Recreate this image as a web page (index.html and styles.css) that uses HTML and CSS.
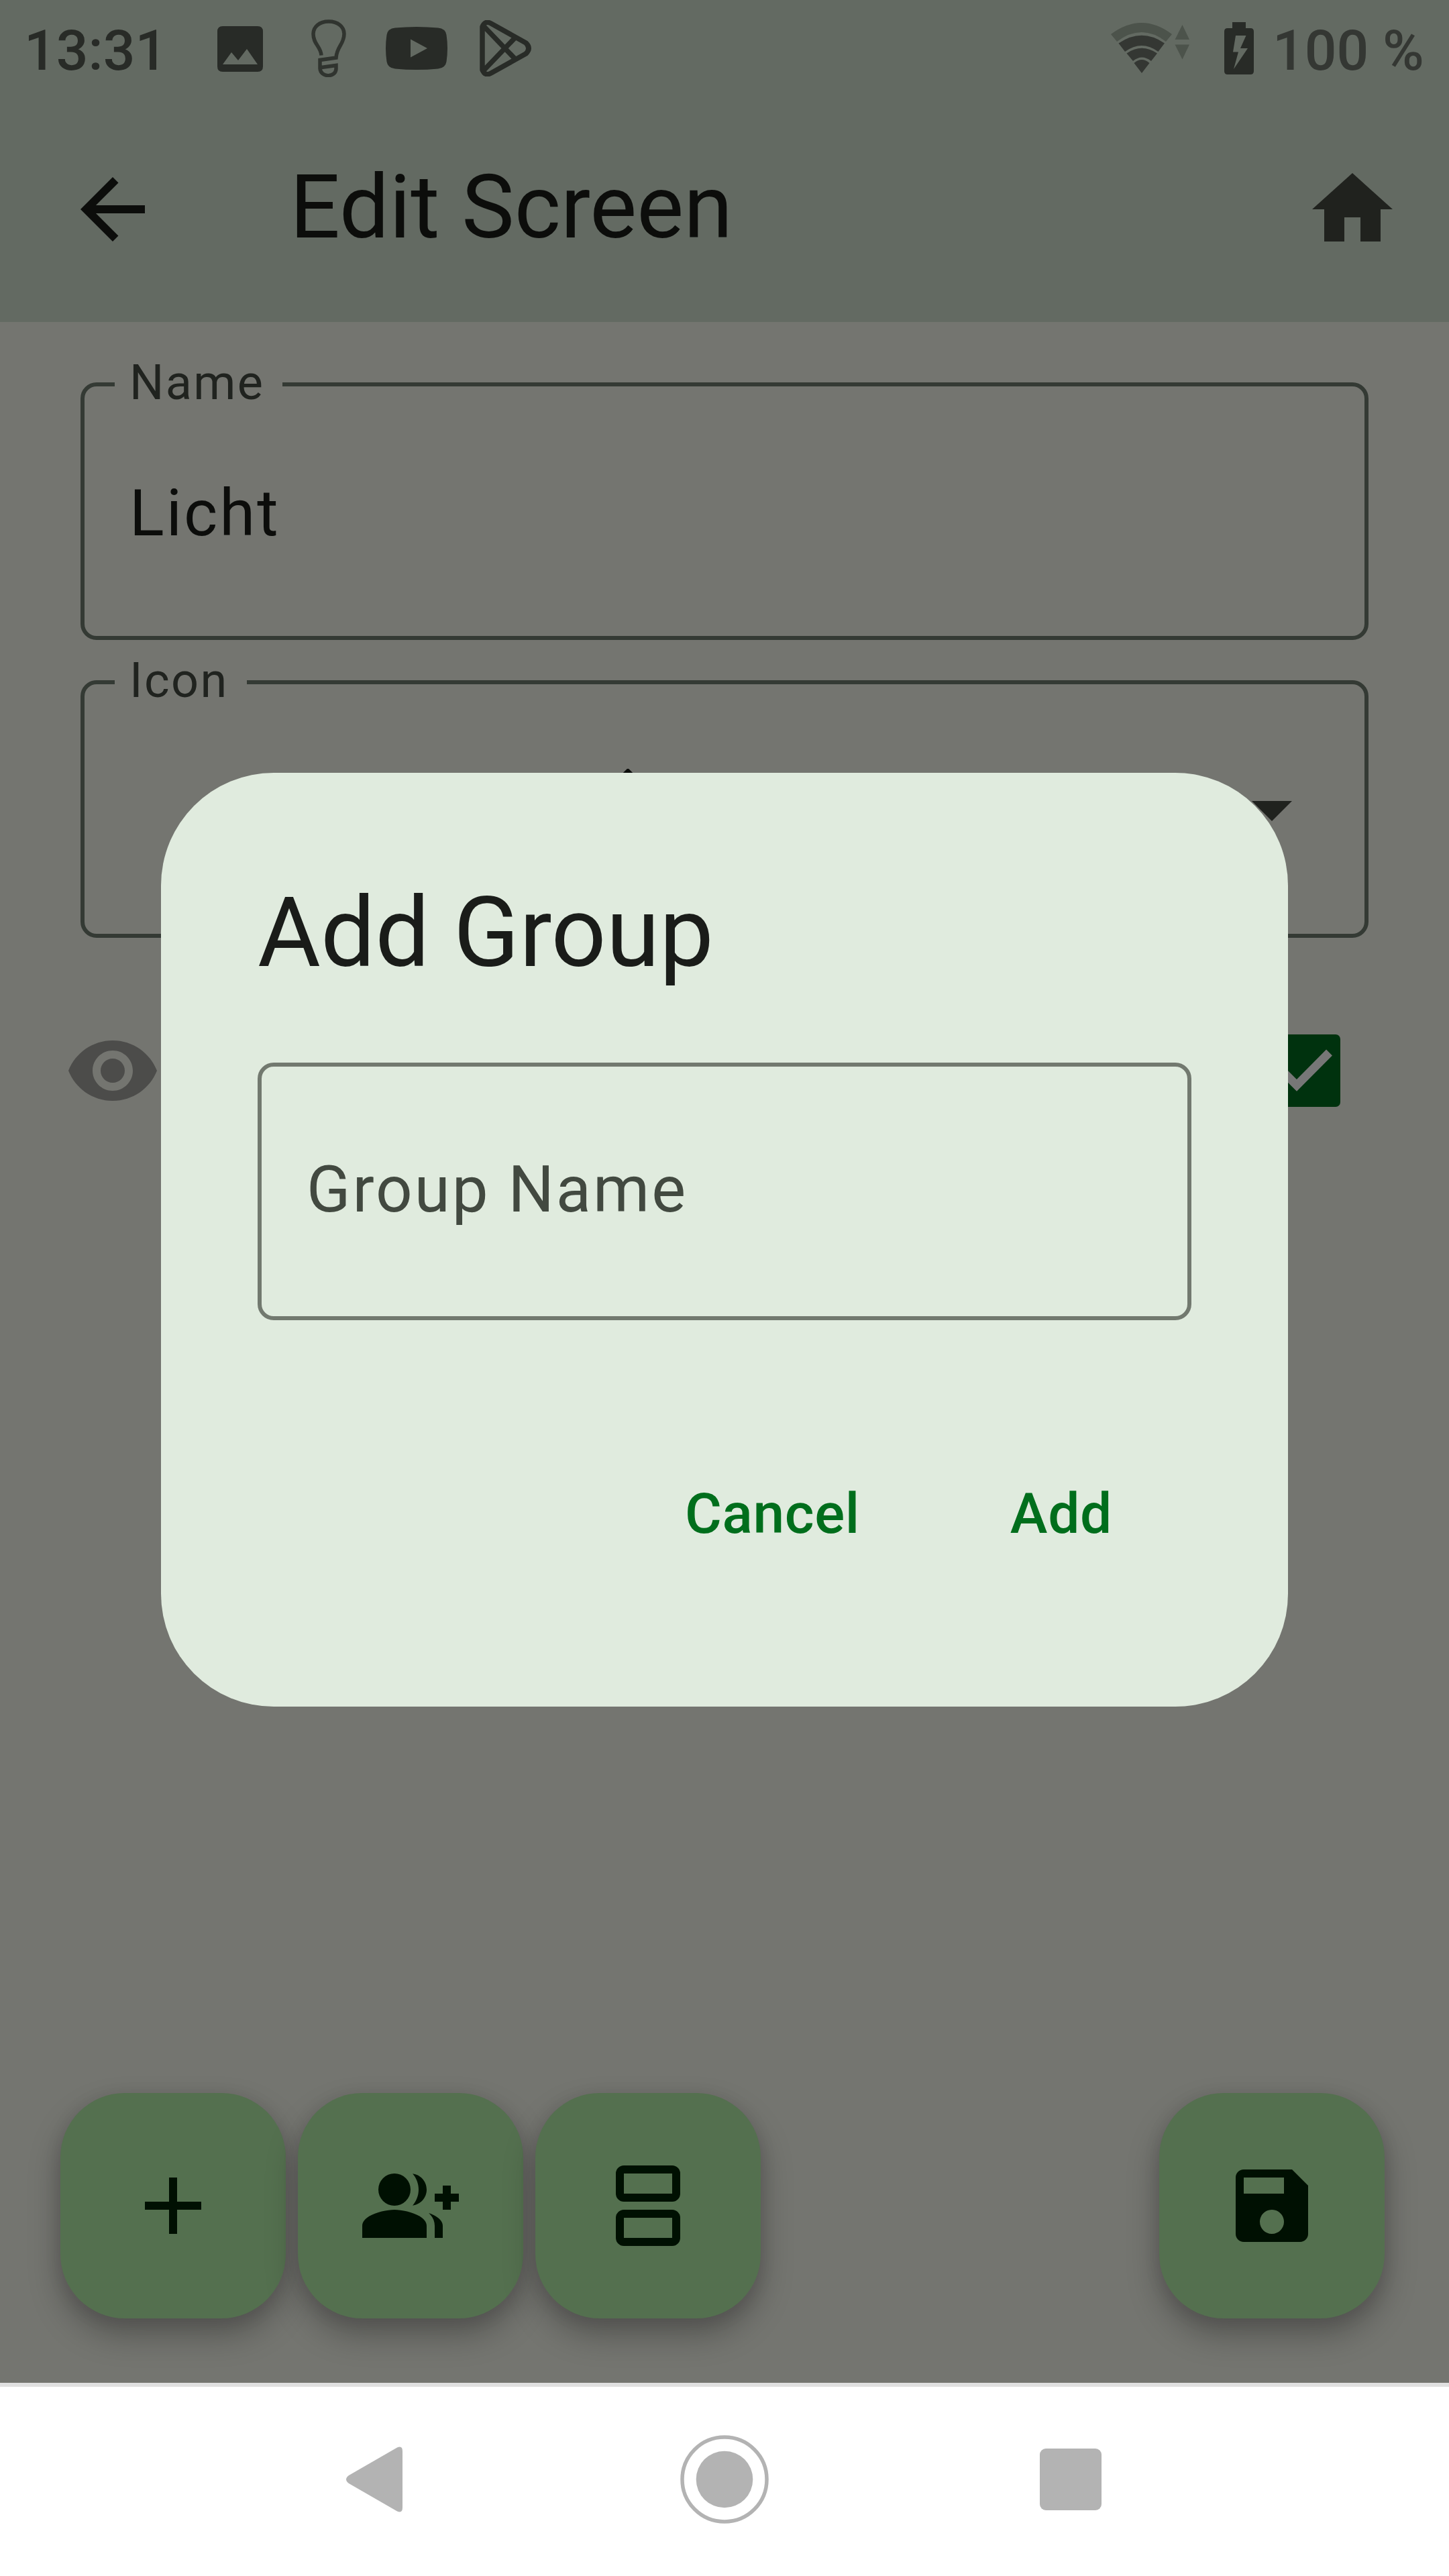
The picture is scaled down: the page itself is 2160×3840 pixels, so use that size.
FILE: index.html
```html
<!DOCTYPE html>
<html lang="en">
<head>
<meta charset="utf-8">
<title>Edit Screen</title>
<link rel="stylesheet" href="styles.css">
</head>
<body>
<div class="device">
  <header class="top">
    <div class="status">
      <span class="clock">13:31</span>
      <svg class="st-image" viewBox="0 0 68 68"><path fill-rule="evenodd" d="M8 0H60Q68 0 68 8V60Q68 68 60 68H8Q0 68 0 60V8Q0 0 8 0ZM8 57H60L44 34L31 51L21 39Z"/></svg>
      <svg class="st-bulb" viewBox="0 0 52 86"><path d="M15 53.500C14 40 3 37 3 21.500C3 11 12 3 26 3S49 11 49 21.500C49 37 38 40 37 57L13 60.500V73C14 87 36 87 37 74V68.500L15 71.500" fill="none" stroke-width="5.500"/></svg>
      <svg class="st-youtube" viewBox="0 0 92 64"><path fill-rule="evenodd" d="M14 1.500Q46-1.500 78 1.500Q89 2.500 90.500 12Q93.500 32 90.500 52Q89 61.500 78 62.500Q46 65.500 14 62.500Q3 61.500 1.500 52Q-1.500 32 1.500 12Q3 2.500 14 1.500ZM37 18.500V45.500L62 32Z"/></svg>
      <svg class="st-play" viewBox="0 0 78 84"><path d="M4 10Q8 0 17 5L69 34Q77 42 69 50L17 79Q8 84 4 74ZM6 9L54 59M6 75L54 25" fill="none" stroke-width="7.500" stroke-linejoin="round"/></svg>
      <span class="spacer"></span>
      <svg class="st-wifi" viewBox="0 0 118 76">
        <path class="dim" d="M0 17Q46-17 91 17L82 28Q46 0 9 28ZM95.500 25L106.500 3L117 25ZM95.500 32.500H117L106.500 54.500Z"/>
        <path class="mid" d="M11.500 30.500Q46 7 80 30.500L70.500 43Q46 25 21 43ZM23.500 45.500Q46 30 69 45.500L60 57Q46 46 33 57ZM34.500 60Q46 50 57.500 60L46 75Z"/>
      </svg>
      <svg class="st-battery" viewBox="0 0 44 78"><path fill-rule="evenodd" d="M12 0H32V9H39Q44 9 44 14V73Q44 78 39 78H5Q0 78 0 73V14Q0 9 5 9H12ZM17 20L13 44.500H21L14 70L35 39H24L32.500 20Z"/></svg>
      <span class="percent">100 %</span>
    </div>
    <div class="appbar">
      <svg class="icon" viewBox="0 0 24 24"><path d="M20 11H7.830l5.590-5.590L12 4l-8 8 8 8 1.410-1.410L7.830 13H20z"/></svg>
      <h1>Edit Screen</h1>
      <svg class="icon home" viewBox="0 0 24 24"><path d="M10 20v-6h4v6h5v-8h3L12 3 2 12h3v8z"/></svg>
    </div>
  </header>

  <main class="content">
    <div class="field">
      <span class="label label-name">Name</span>
      <span class="value">Licht</span>
    </div>
    <div class="field field-icon">
      <span class="label label-icon">Icon</span>
      <svg class="icon preview" viewBox="0 0 24 24"><path d="M11.800 2h.4l5 5-5.200 5-5.200-5z"/></svg>
      <svg class="icon" viewBox="0 0 24 24"><path d="M7 10l5 5 5-5z"/></svg>
    </div>
    <div class="visible-row">
      <svg class="icon eye" viewBox="0 0 24 24"><path d="M12 4.500C7 4.500 2.730 7.610 1 12c1.730 4.390 6 7.500 11 7.500s9.270-3.110 11-7.500c-1.730-4.390-6-7.500-11-7.500zM12 17c-2.760 0-5-2.240-5-5s2.240-5 5-5 5 2.240 5 5-2.240 5-5 5zm0-8c-1.660 0-3 1.340-3 3s1.340 3 3 3 3-1.340 3-3-1.340-3-3-3z"/></svg>
      <svg class="check" viewBox="0 0 108 108"><path d="M18 51L43 76L91.500 27"/></svg>
    </div>
  </main>

  <div class="fabs">
    <div class="fab"><svg class="icon" viewBox="0 0 24 24"><path d="M19 13h-6v6h-2v-6H5v-2h6V5h2v6h6z"/></svg></div>
    <div class="fab"><svg class="icon" viewBox="0 0 24 24"><path d="M22 9V7h-2v2h-2v2h2v2h2v-2h2V9z"/><circle cx="8" cy="8" r="4"/><path d="M8 13c-2.670 0-8 1.340-8 4v3h16v-3c0-2.660-5.330-4-8-4zM12.510 4.050C13.430 5.110 14 6.490 14 8s-.57 2.890-1.490 3.950C14.470 11.700 16 10.040 16 8s-1.530-3.700-3.490-3.950zM16.530 13.830C17.420 14.660 18 15.700 18 17v3h2v-3c0-1.450-1.590-2.510-3.470-3.170z"/></svg></div>
    <div class="fab"><svg class="icon" viewBox="0 0 24 24"><path fill-rule="evenodd" d="M6 2h12a2 2 0 0 1 2 2v5a2 2 0 0 1-2 2H6a2 2 0 0 1-2-2V4a2 2 0 0 1 2-2zM6 4v5h12V4zM6 13h12a2 2 0 0 1 2 2v5a2 2 0 0 1-2 2H6a2 2 0 0 1-2-2v-5a2 2 0 0 1 2-2zM6 15v5h12v-5z"/></svg></div>
    <div class="fab save"><svg class="icon" viewBox="0 0 24 24"><path d="M17 3H5c-1.110 0-2 .9-2 2v14c0 1.100.89 2 2 2h14c1.100 0 2-.9 2-2V7l-4-4zm-5 16c-1.660 0-3-1.340-3-3s1.340-3 3-3 3 1.340 3 3-1.340 3-3 3zm3-10H5V5h10v4z"/></svg></div>
  </div>

  <nav class="navbar">
    <svg class="nav-back" viewBox="0 0 84 98"><path d="M4 43L76 1.500Q84-2 84 7V91Q84 100 76 96.500L4 55Q-4 49 4 43Z"/></svg>
    <svg class="nav-home" viewBox="0 0 132 132"><circle cx="66" cy="66" r="42.300"/><circle cx="66" cy="66" r="63" fill="none" stroke="#b3b3b3" stroke-width="5.500"/></svg>
    <span class="nav-recent"></span>
  </nav>

  <div class="dialog">
    <h2>Add Group</h2>
    <div class="group-field">Group Name</div>
    <div class="actions">
      <span class="action">Cancel</span>
      <span class="action">Add</span>
    </div>
  </div>
</div>
</body>
</html>
```
FILE: styles.css
```css
* { box-sizing: border-box; }
body { margin: 0; }
.device {
  position: relative;
  display: flex;
  flex-direction: column;
  width: 2160px;
  height: 3840px;
  overflow: hidden;
  background: #747570;
  color: #0c0d0b;
  font-family: Roboto, "Liberation Sans", sans-serif;
}
svg { display: block; flex: none; }
h1, h2 { margin: 0; font-weight: 400; white-space: nowrap; }
.icon { width: 144px; height: 144px; }

.top { height: 480px; background: #636a62; }
.status {
  display: flex;
  align-items: center;
  height: 144px;
  padding: 0 37px 0 36px;
  font-size: 84px;
  font-weight: 500;
  fill: #282b27;
}
.clock { width: 288px; padding-top: 6px; color: #282b27; }
.spacer { flex: 1; }
.percent { width: 226px; padding-top: 6px; color: #343733; white-space: nowrap; }
.st-image { width: 68px; height: 68px; margin: 2px 72px 0 0; }
.st-bulb { width: 52px; height: 86px; margin-right: 59px; stroke: #30342f; }
.st-youtube { width: 92px; height: 64px; margin-right: 48px; }
.st-play { width: 78px; height: 84px; stroke: #282b27; }
.st-wifi { width: 118px; height: 76px; margin-right: 51px; }
.st-wifi .dim { fill: #4c534b; }
.st-wifi .mid { fill: #343733; }
.st-battery { width: 44px; height: 78px; margin-right: 28px; }

.appbar {
  display: flex;
  align-items: center;
  height: 336px;
  padding: 0 72px 0 96px;
  fill: #0c0d0b;
}
.appbar h1 { flex: 1; padding: 0 0 6px 192px; font-size: 132px; }
.appbar .home { fill: #20221e; }

.content { flex: 1; padding: 90px 120px 0; }
.field {
  position: relative;
  display: flex;
  align-items: center;
  height: 384px;
  padding: 0 67px;
  border: 6px solid #343a34;
  border-radius: 24px;
}
.field-icon { margin-top: 60px; padding-right: 66px; justify-content: flex-end; fill: #20221e; }
.label {
  position: absolute;
  top: -47px;
  left: 45px;
  height: 84px;
  padding-left: 22px;
  background: #747570;
  color: #20231f;
  font-size: 72px;
  line-height: 84px;
  letter-spacing: 2.4px;
}
.label-name { width: 250px; }
.label-icon { width: 197px; }
.value { padding-top: 6px; font-size: 96px; letter-spacing: 3px; }
.preview { position: absolute; left: 738px; top: 114px; fill: #0c0d0b; }
.visible-row {
  display: flex;
  align-items: center;
  justify-content: space-between;
  height: 144px;
  margin: 126px 42px 0 -24px;
}
.eye { fill: #4c4c4a; }
.check {
  width: 108px;
  height: 108px;
  border-radius: 7px;
  background: #00320e;
  fill: none;
  stroke: #777777;
  stroke-width: 12.5px;
}

.fabs { display: flex; gap: 18px; padding: 0 96px 96px 90px; }
.fab {
  display: flex;
  align-items: center;
  justify-content: center;
  width: 336px;
  height: 336px;
  border-radius: 96px;
  background: #54704f;
  fill: #001002;
  box-shadow: 0 24px 48px rgba(0, 0, 0, 0.28), 0 4px 24px rgba(40, 20, 40, 0.1);
}
.save { margin-left: auto; }

.navbar {
  display: flex;
  align-items: center;
  height: 288px;
  padding: 0 0 6px 516px;
  border-top: 6px solid #e0e0e0;
  background: #ffffff;
  fill: #b3b3b3;
}
.nav-back { width: 84px; height: 98px; margin-right: 414px; }
.nav-home { width: 132px; height: 132px; margin-right: 404px; }
.nav-recent { width: 92px; height: 92px; border-radius: 9px; background: #b3b3b3; }

.dialog {
  position: absolute;
  left: 240px;
  top: 1152px;
  width: 1680px;
  height: 1392px;
  padding: 144px;
  border-radius: 168px;
  background: #e0ebde;
}
.dialog h2 {
  height: 288px;
  color: #1a1c19;
  font-size: 144px;
  line-height: 190px;
}
.group-field {
  height: 384px;
  padding-left: 67px;
  border: 6px solid #72796f;
  border-radius: 24px;
  color: #424940;
  font-size: 96px;
  line-height: 366px;
  letter-spacing: 3px;
}
.actions {
  display: flex;
  justify-content: flex-end;
  gap: 224px;
  padding: 231px 118px 0 0;
  color: #006e1c;
  font-size: 84px;
  font-weight: 500;
  line-height: 116px;
  letter-spacing: 0.6px;
}
```
